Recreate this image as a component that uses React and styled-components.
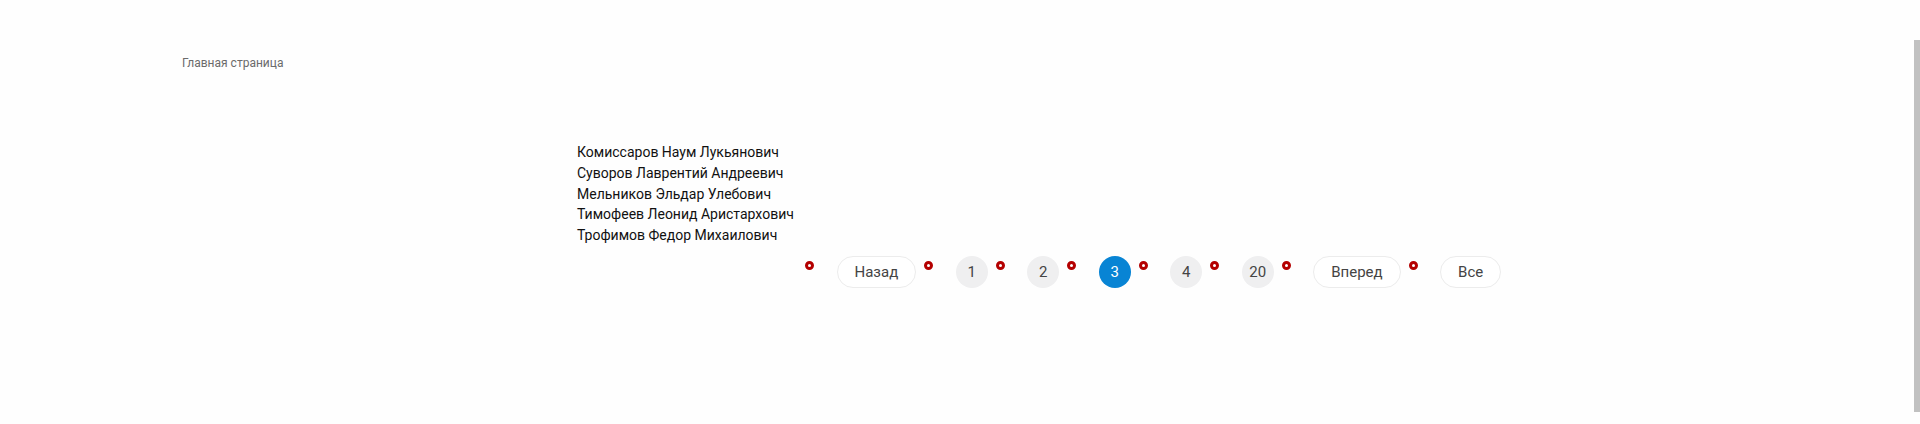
import React from "react";
import styled, { createGlobalStyle } from "styled-components";

const people = [
  "Комиссаров Наум Лукьянович",
  "Суворов Лаврентий Андреевич",
  "Мельников Эльдар Улебович",
  "Тимофеев Леонид Аристархович",
  "Трофимов Федор Михаилович",
];

const pages = [
  { label: "Назад", wide: true },
  { label: "1" },
  { label: "2" },
  { label: "3", active: true },
  { label: "4" },
  { label: "20" },
  { label: "Вперед", wide: true },
  { label: "Все", wide: true },
];

const GlobalStyle = createGlobalStyle`
  html, body {
    margin: 0;
    padding: 0;
    background: #fefefe;
    font-family: Roboto, "Liberation Sans", sans-serif;
  }
`;

const Page = styled.div`
  height: 424px;
  position: relative;
  overflow: hidden;
`;

const Breadcrumb = styled.div`
  padding: 56px 0 0 182px;
  font-size: 12px;
  line-height: 14px;
  color: #6b6b6b;
`;

const People = styled.ul`
  list-style: none;
  margin: 72px 0 0 577px;
  padding: 0;
  font-size: 14px;
  line-height: 20.8px;
  color: #111;
`;

const Pager = styled.ul`
  list-style: none;
  margin: 10px 0 0 805px;
  padding: 0;
  display: flex;
  gap: 8px;
`;

const PagerItem = styled.li`
  display: flex;
  align-items: flex-start;
  gap: 22.5px;
`;

const Dot = styled.span`
  width: 9px;
  height: 9px;
  margin-top: 5px;
  box-sizing: border-box;
  border-radius: 50%;
  border: 3px solid #b40000;
  background: #fff;
`;

const PageButton = styled.button`
  height: 32px;
  min-width: 32px;
  box-sizing: border-box;
  padding: ${(p) => (p.$wide ? "0 17px" : "0")};
  border-radius: 16px;
  border: ${(p) => (p.$wide ? "1.5px solid #ececec" : "none")};
  background: ${(p) =>
    p.$active ? "#0884d4" : p.$wide ? "#fff" : "#efeff0"};
  color: ${(p) => (p.$active ? "#fff" : "#444")};
  font-family: Roboto, "Liberation Sans", sans-serif;
  font-size: 15px;
  cursor: pointer;
`;

const ScrollThumb = styled.div`
  position: absolute;
  right: 0;
  top: 40px;
  bottom: 12px;
  width: 6px;
  background: #c1c1c1;
`;

const App = () => {
  return (
    <Page>
      <GlobalStyle />
      <Breadcrumb>Главная страница</Breadcrumb>
      <People>
        {people.map((name) => (
          <li key={name}>{name}</li>
        ))}
      </People>
      <Pager>
        {pages.map((p) => (
          <PagerItem key={p.label}>
            <Dot />
            <PageButton $wide={p.wide} $active={p.active}>
              {p.label}
            </PageButton>
          </PagerItem>
        ))}
      </Pager>
      <ScrollThumb />
    </Page>
  );
};

export default App;
